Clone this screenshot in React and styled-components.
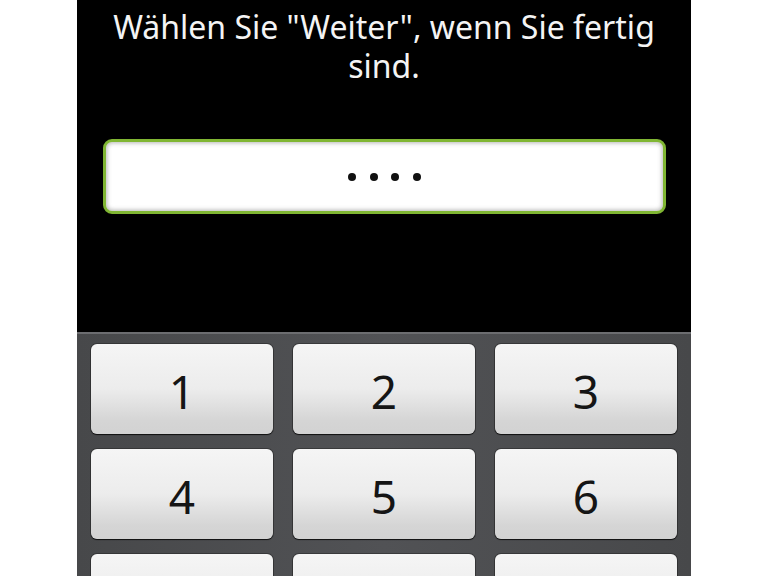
import React from 'react'
import styled, { createGlobalStyle } from 'styled-components'

const GlobalStyle = createGlobalStyle`
  html, body {
    margin: 0;
    padding: 0;
    background: #ffffff;
  }
  body {
    font-family: "Noto Sans", "DejaVu Sans", sans-serif;
  }
`

const keys = ['1', '2', '3', '4', '5', '6', '7', '8', '9']

const Page = () => {
  const pin = '1234'

  return (
    <Container>
      <GlobalStyle />
      <Phone>
        <Screen>
          <Title>Wählen Sie "Weiter", wenn Sie fertig sind.</Title>
          <PinField>
            {pin.split('').map((c, i) => (
              <Dot key={i} />
            ))}
          </PinField>
        </Screen>
        <Keypad>
          {keys.map((k) => (
            <Key key={k}>{k}</Key>
          ))}
        </Keypad>
      </Phone>
    </Container>
  )
}

const Container = styled.div`
  width: 768px;
  height: 576px;
  overflow: hidden;
  background: #ffffff;
`

const Phone = styled.div`
  width: 614px;
  height: 576px;
  margin-left: 77px;
  display: flex;
  flex-direction: column;
  background: #000000;
`

const Screen = styled.div`
  height: 332px;
  flex-shrink: 0;
  display: flex;
  flex-direction: column;
  padding-top: 7px;
  box-sizing: border-box;
  background: #000000;
`

const Title = styled.div`
  color: #f4f4f4;
  font-size: 32px;
  line-height: 39px;
  text-align: center;
  padding: 0 20px;
`

const PinField = styled.div`
  margin: 54px 25px 0 26px;
  height: 75px;
  box-sizing: border-box;
  border: 3px solid #80b633;
  border-radius: 9px;
  background: #ffffff;
  box-shadow: inset 0 0 4px 1px rgba(110, 110, 110, 0.5);
  display: flex;
  justify-content: center;
  align-items: center;
  gap: 13.7px;
`

const Dot = styled.span`
  width: 8px;
  height: 8px;
  border-radius: 50%;
  background: #111111;
`

const Keypad = styled.div`
  flex: 1;
  display: grid;
  grid-template-columns: repeat(3, 182px);
  grid-auto-rows: 90px;
  column-gap: 20px;
  row-gap: 15px;
  padding: 10px 13px 0 14px;
  border-top: 2px solid #6c6d70;
  background: linear-gradient(to right, #47484a, #515255 50%, #47484a);
`

const Key = styled.div`
  display: flex;
  align-items: center;
  justify-content: center;
  padding-top: 4px;
  box-sizing: border-box;
  border-radius: 6px;
  background: linear-gradient(to bottom, #f5f5f5 0%, #ececec 50%, #d5d5d5 85%, #d2d2d2 100%);
  box-shadow: 0 1px 1px rgba(0, 0, 0, 0.7), 0 0 0 1px rgba(30, 30, 30, 0.45);
  color: #151515;
  font-size: 46px;
  font-weight: 400;
  line-height: 1;
`

export default Page
